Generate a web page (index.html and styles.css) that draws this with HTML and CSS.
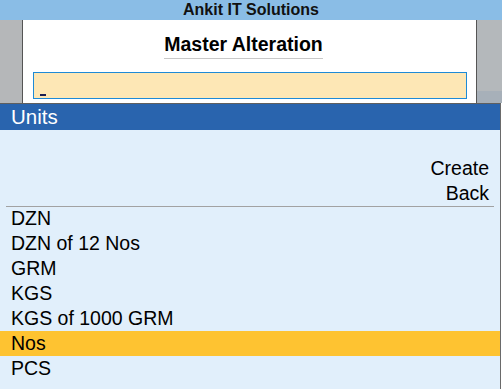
FILE: index.html
```html
<!DOCTYPE html>
<html lang="en">
<head>
    <meta charset="UTF-8">
    <meta name="viewport" content="width=device-width, initial-scale=1.0">
    <title>Master Alteration - Units</title>
    <link rel="stylesheet" href="styles.css">
</head>
<body>
    <div class="titlebar">Ankit IT Solutions</div>
    <div class="screen">
        <div class="side-left"></div>
        <div class="panel">
            <div class="panel-head"><h1>Master Alteration</h1></div>
            <div class="field"><span class="cursor"></span></div>
        </div>
        <div class="side-right">
            <div class="shade"></div>
        </div>
    </div>
    <div class="popup">
        <div class="popup-head">Units</div>
        <div class="actions">
            <div>Create</div>
            <div>Back</div>
        </div>
        <div class="divider"></div>
        <ul class="list">
            <li>DZN</li>
            <li>DZN of 12 Nos</li>
            <li>GRM</li>
            <li>KGS</li>
            <li>KGS of 1000 GRM</li>
            <li class="selected">Nos</li>
            <li>PCS</li>
        </ul>
    </div>
</body>
</html>
```

FILE: styles.css
```css
html, body { height: 100%; }
body { margin: 0; font-family: "Liberation Sans", Arial, sans-serif; color: #000; display: flex; flex-direction: column; overflow: hidden; }
.titlebar { height: 20px; line-height: 20px; background: #8abde6; text-align: center; font-weight: bold; font-size: 16px; color: #111; }
.screen { display: flex; height: 83px; background: #b5b7b9; }
.side-left { width: 22px; }
.panel { width: 453px; background: #fff; border-left: 1px solid #555; border-right: 1px solid #555; }
.side-right { flex: 1; display: flex; flex-direction: column; justify-content: flex-end; background: #b4b8bb; }
.shade { height: 12px; background: #a7b0b9; }
.panel-head { text-align: center; padding-right: 12px; }
h1 { display: inline-block; margin: 13px 0 0; font-size: 19.5px; line-height: 22px; padding-bottom: 3px; border-bottom: 1px solid #c8c8c8; }
.field { margin: 13px 0 0 10px; width: 432px; height: 25px; border: 1px solid #1e8ad6; background: #fde7b5; position: relative; }
.cursor { position: absolute; left: 6px; top: 21px; width: 6px; height: 2px; background: #1b1f52; }
.popup { flex: 1; width: 500px; background: #e1effb; border-top: 1px solid #5f5f5f; border-right: 1px solid #6a6a6a; }
.popup-head { height: 26px; line-height: 26px; background: #2964ae; color: #fff; font-size: 20.5px; padding-left: 11px; }
.actions { padding: 26px 11px 0 0; text-align: right; font-size: 19.5px; line-height: 25px; }
.divider { height: 1px; margin: 0 6px -1px; background: #a2a2a2; position: relative; }
.list { list-style: none; margin: 0; padding: 0; font-size: 19.5px; line-height: 25px; }
.list li { height: 25px; padding-left: 11px; }
.list li.selected { background: #fec331; }
```
